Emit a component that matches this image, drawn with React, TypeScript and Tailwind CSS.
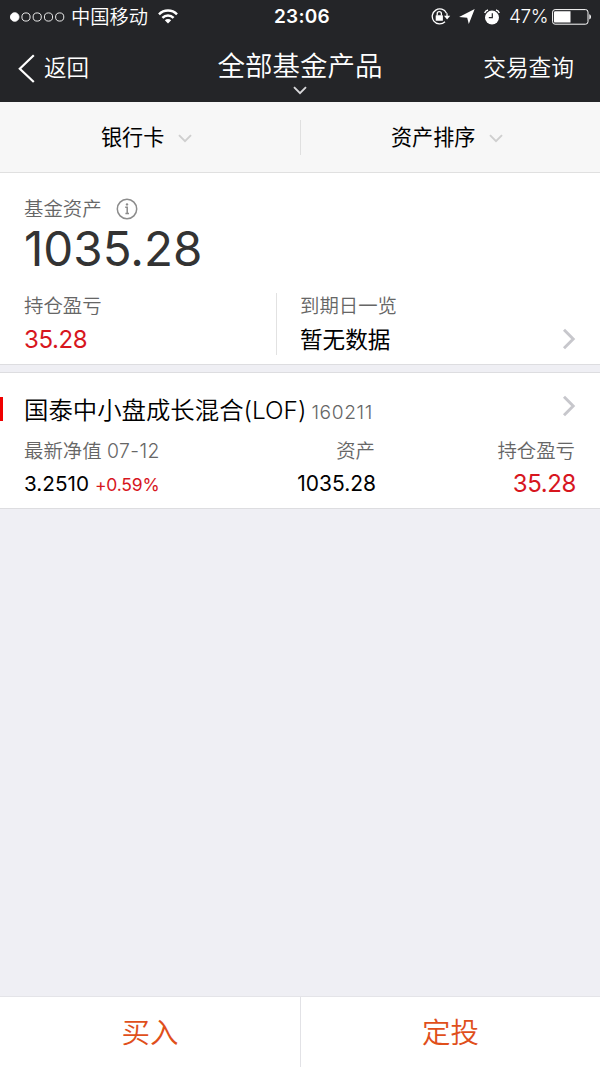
import React from 'react';

const fund = {
  name: '国泰中小盘成长混合(LOF)',
  code: '160211',
  date: '07-12',
  netValue: '3.2510',
  change: '+0.59%',
  asset: '1035.28',
  profit: '35.28',
};

const filters = ['银行卡', '资产排序'];
const actions = ['买入', '定投'];

function ChevronDown({ className }: { className?: string }) {
  return (
    <svg className={className} width="14" height="9" viewBox="0 0 14 9" fill="none" stroke="currentColor" strokeWidth="1.9">
      <path d="M1 1.2l6 6 6-6" />
    </svg>
  );
}

function ChevronRight({ className }: { className?: string }) {
  return (
    <svg className={className} width="14" height="22" viewBox="0 0 14 22" fill="none" stroke="#c7c7cc" strokeWidth="2.9">
      <path d="M2 1.8l9.2 9.2L2 20.2" />
    </svg>
  );
}

function StatusBar() {
  return (
    <div className="grid h-8 grid-cols-3 items-center pr-2 pl-2.5">
      <div className="flex items-center">
        <svg width="55" height="10" viewBox="0 0 55 10" fill="none" stroke="#fff" strokeWidth="0.9">
          <circle cx="4.7" cy="5" r="4.3" fill="#fff" />
          <circle cx="16" cy="5" r="4.1" />
          <circle cx="27.2" cy="5" r="4.1" />
          <circle cx="38.5" cy="5" r="4.1" />
          <circle cx="49.7" cy="5" r="4.1" />
        </svg>
        <span className="ml-1.5 text-[19.3px] leading-8 whitespace-nowrap">中国移动</span>
        <svg className="ml-2.5" width="20" height="15" viewBox="0 0 20 15" fill="none" stroke="#fff" strokeWidth="2.5">
          <path d="M1 5.3a12.7 12.7 0 0 1 18 0" />
          <path d="M4.4 8.8a7.9 7.9 0 0 1 11.2 0" />
          <path d="M10 14.6l-3.2-3.3a4.5 4.5 0 0 1 6.4 0z" fill="#fff" stroke="none" />
        </svg>
      </div>
      <div className="pt-px pl-0.5 text-center text-[19px] leading-8 font-semibold tracking-[0.3px]">23:06</div>
      <div className="flex h-8 items-center justify-end">
        <svg width="20" height="17" viewBox="0 0 20 17" fill="none" stroke="#fff" strokeWidth="1.3">
          <path d="M15.5 5.2A7.5 7.5 0 1 0 14 13.8" />
          <path d="M16 5.2v3" />
          <path d="M13 7.7h6.2l-3.1 3.8z" fill="#fff" stroke="none" />
          <rect x="4.7" y="7.2" width="7.2" height="5.6" rx="0.5" fill="#fff" stroke="none" />
          <path d="M6.2 7.6V5.8a2.1 2.1 0 0 1 4.2 0v1.8" />
        </svg>
        <svg className="ml-2" width="16" height="15" viewBox="0 0 16 15" fill="#fff">
          <path d="M15.7 0.1L9.8 14.9 8.2 8.7 0.1 7.9z" />
        </svg>
        <svg className="ml-[9px]" width="16" height="16" viewBox="0 0 16 16" fill="none">
          <circle cx="8" cy="8.6" r="7" fill="#fff" />
          <path d="M0.7 3.9A4.5 4.5 0 0 1 4 0.9M12 0.9a4.5 4.5 0 0 1 3.3 3" stroke="#fff" strokeWidth="1.5" />
          <path d="M8.3 4.3v4.4H4.8" stroke="#242528" strokeWidth="1.2" />
        </svg>
        <span className="ml-[9px] text-[19px] leading-8 tracking-[-0.5px]">47%</span>
        <svg className="ml-1" width="40" height="16" viewBox="0 0 40 16" fill="none">
          <rect x="0.6" y="0.6" width="35.4" height="14.6" rx="2.5" stroke="#fff" strokeWidth="1" />
          <path d="M3.2 2.2H18.5v11.4H3.2A1.2 1.2 0 0 1 2 12.4V3.4a1.2 1.2 0 0 1 1.2-1.2z" fill="#fff" />
          <path d="M37.3 5.3c2.2.6 2.2 4.6 0 5.2z" fill="#fff" />
        </svg>
      </div>
    </div>
  );
}

function NavBar() {
  return (
    <div className="grid h-[70px] grid-cols-[1fr_auto_1fr] items-start">
      <div className="flex items-center pt-[21px] pl-[18px]">
        <svg width="17" height="29" viewBox="0 0 17 29" fill="none" stroke="#fff" strokeWidth="2.2">
          <path d="M15.8 1.2L1.8 14.7l14 13.3" />
        </svg>
        <span className="ml-[9px] text-[22.5px] leading-[30px]">返回</span>
      </div>
      <div className="flex flex-col items-center pt-[16px]">
        <h1 className="text-[27.5px] leading-[36px] font-[350]">全部基金产品</h1>
        <ChevronDown className="mt-[2px] text-[#d8d8da]" />
      </div>
      <div className="pt-[21px] pr-[26px] text-right text-[22.7px] leading-[30px]">交易查询</div>
    </div>
  );
}

export default function App() {
  return (
    <div className="flex h-[1067px] w-[600px] flex-col overflow-hidden bg-[#efeff4] font-['Inter','Noto_Sans_CJK_SC',sans-serif] font-[350] text-black">
      <header className="h-[102px] shrink-0 bg-[#242528] text-white">
        <StatusBar />
        <NavBar />
      </header>

      {/* Filters */}
      <div className="grid h-[71px] shrink-0 grid-cols-2 items-center border-b border-[#e0e0e0] bg-[#f7f7f7]">
        {filters.map((label, idx) => (
          <div
            key={label}
            className={`flex h-[35px] items-center ${
              idx === 0 ? 'pl-[101px]' : 'border-l border-[#e0e0e0] pl-[90px]'
            }`}
          >
            <span className="pt-px text-[21.1px] leading-[30px] font-normal">{label}</span>
            <ChevronDown className="mt-[3px] ml-[14px] text-[#cfcfcf]" />
          </div>
        ))}
      </div>

      {/* Asset summary */}
      <section className="h-[192px] shrink-0 border-b border-[#dddde0] bg-white px-6 pt-[21px]">
        <div className="flex h-[30px] items-center">
          <span className="pt-0.5 text-[19.4px] text-[#666]">基金资产</span>
          <svg className="ml-[14px]" width="22" height="22" viewBox="0 0 22 22" fill="none" stroke="#8c8c8c" strokeWidth="1.5">
            <circle cx="11" cy="11" r="9.7" />
            <path d="M9.2 9.3h2v6.3M9.4 15.6h3.6" />
            <circle cx="11" cy="6.4" r="1.2" fill="#8c8c8c" stroke="none" />
          </svg>
        </div>
        <div className="h-[50px] text-[47.5px] leading-[50px] font-normal text-[#333]">1035.28</div>
        <div className="mt-[19px] flex h-[62px]">
          <div className="w-[253px] border-r border-[#e2e2e2]">
            <div className="pt-px text-[19.4px] leading-6 text-[#666]">持仓盈亏</div>
            <div className="mt-[7px] text-[24px] leading-[30px] font-normal tracking-[-0.4px] text-[#d7161e]">35.28</div>
          </div>
          <div className="flex flex-1 justify-between pl-[23px]">
            <div>
              <div className="pt-px text-[19.4px] leading-6 text-[#666]">到期日一览</div>
              <div className="mt-[7px] text-[22.6px] leading-[30px] font-normal">暂无数据</div>
            </div>
            <ChevronRight className="mt-[35px]" />
          </div>
        </div>
      </section>

      {/* Fund holding */}
      <section className="mt-[7px] flex h-[137px] shrink-0 flex-col border-y border-[#dddde0] bg-white pt-[19px]">
        <div className="flex h-[34px] items-center">
          <div className="h-6 w-[3px] bg-[#f00000]" />
          <div className="ml-[21px] flex flex-1 items-baseline pt-px">
            <span className="text-[24.4px] leading-[34px]">{fund.name}</span>
            <span className="ml-[5px] text-[19.2px] tracking-[0.6px] text-[#666]">{fund.code}</span>
          </div>
          <ChevronRight className="mr-6 mb-[6px]" />
        </div>
        <div className="mt-[11px] grid grid-cols-[200px_152px_200px] px-6">
          <div>
            <div className="text-[19.4px] leading-[28px] text-[#666]">
              最新净值 <span className="tracking-[0.4px]">{fund.date}</span>
            </div>
            <div className="mt-[4px] flex items-baseline font-normal">
              <span className="text-[20.7px] leading-[30px]">{fund.netValue}</span>
              <span className="ml-[6px] text-[17.5px] tracking-[-0.2px] text-[#d7161e]">{fund.change}</span>
            </div>
          </div>
          <div className="text-right">
            <div className="pr-px text-[19.4px] leading-[28px] text-[#666]">资产</div>
            <div className="mt-[4px] text-[21px] leading-[30px] font-normal">{fund.asset}</div>
          </div>
          <div className="text-right">
            <div className="pr-px text-[19.4px] leading-[28px] text-[#666]">持仓盈亏</div>
            <div className="mt-[4px] text-[24px] leading-[30px] font-normal tracking-[-0.4px] text-[#d7161e]">
              {fund.profit}
            </div>
          </div>
        </div>
      </section>

      {/* Bottom actions */}
      <footer className="mt-auto grid h-[71px] grid-cols-2 border-t border-[#e4e4e8] bg-white">
        {actions.map((label, idx) => (
          <button
            key={label}
            className={`pt-0.5 text-[28.5px] text-[#e04f1b] ${idx === 1 ? 'border-l border-[#e2e2e6]' : ''}`}
          >
            {label}
          </button>
        ))}
      </footer>
    </div>
  );
}
